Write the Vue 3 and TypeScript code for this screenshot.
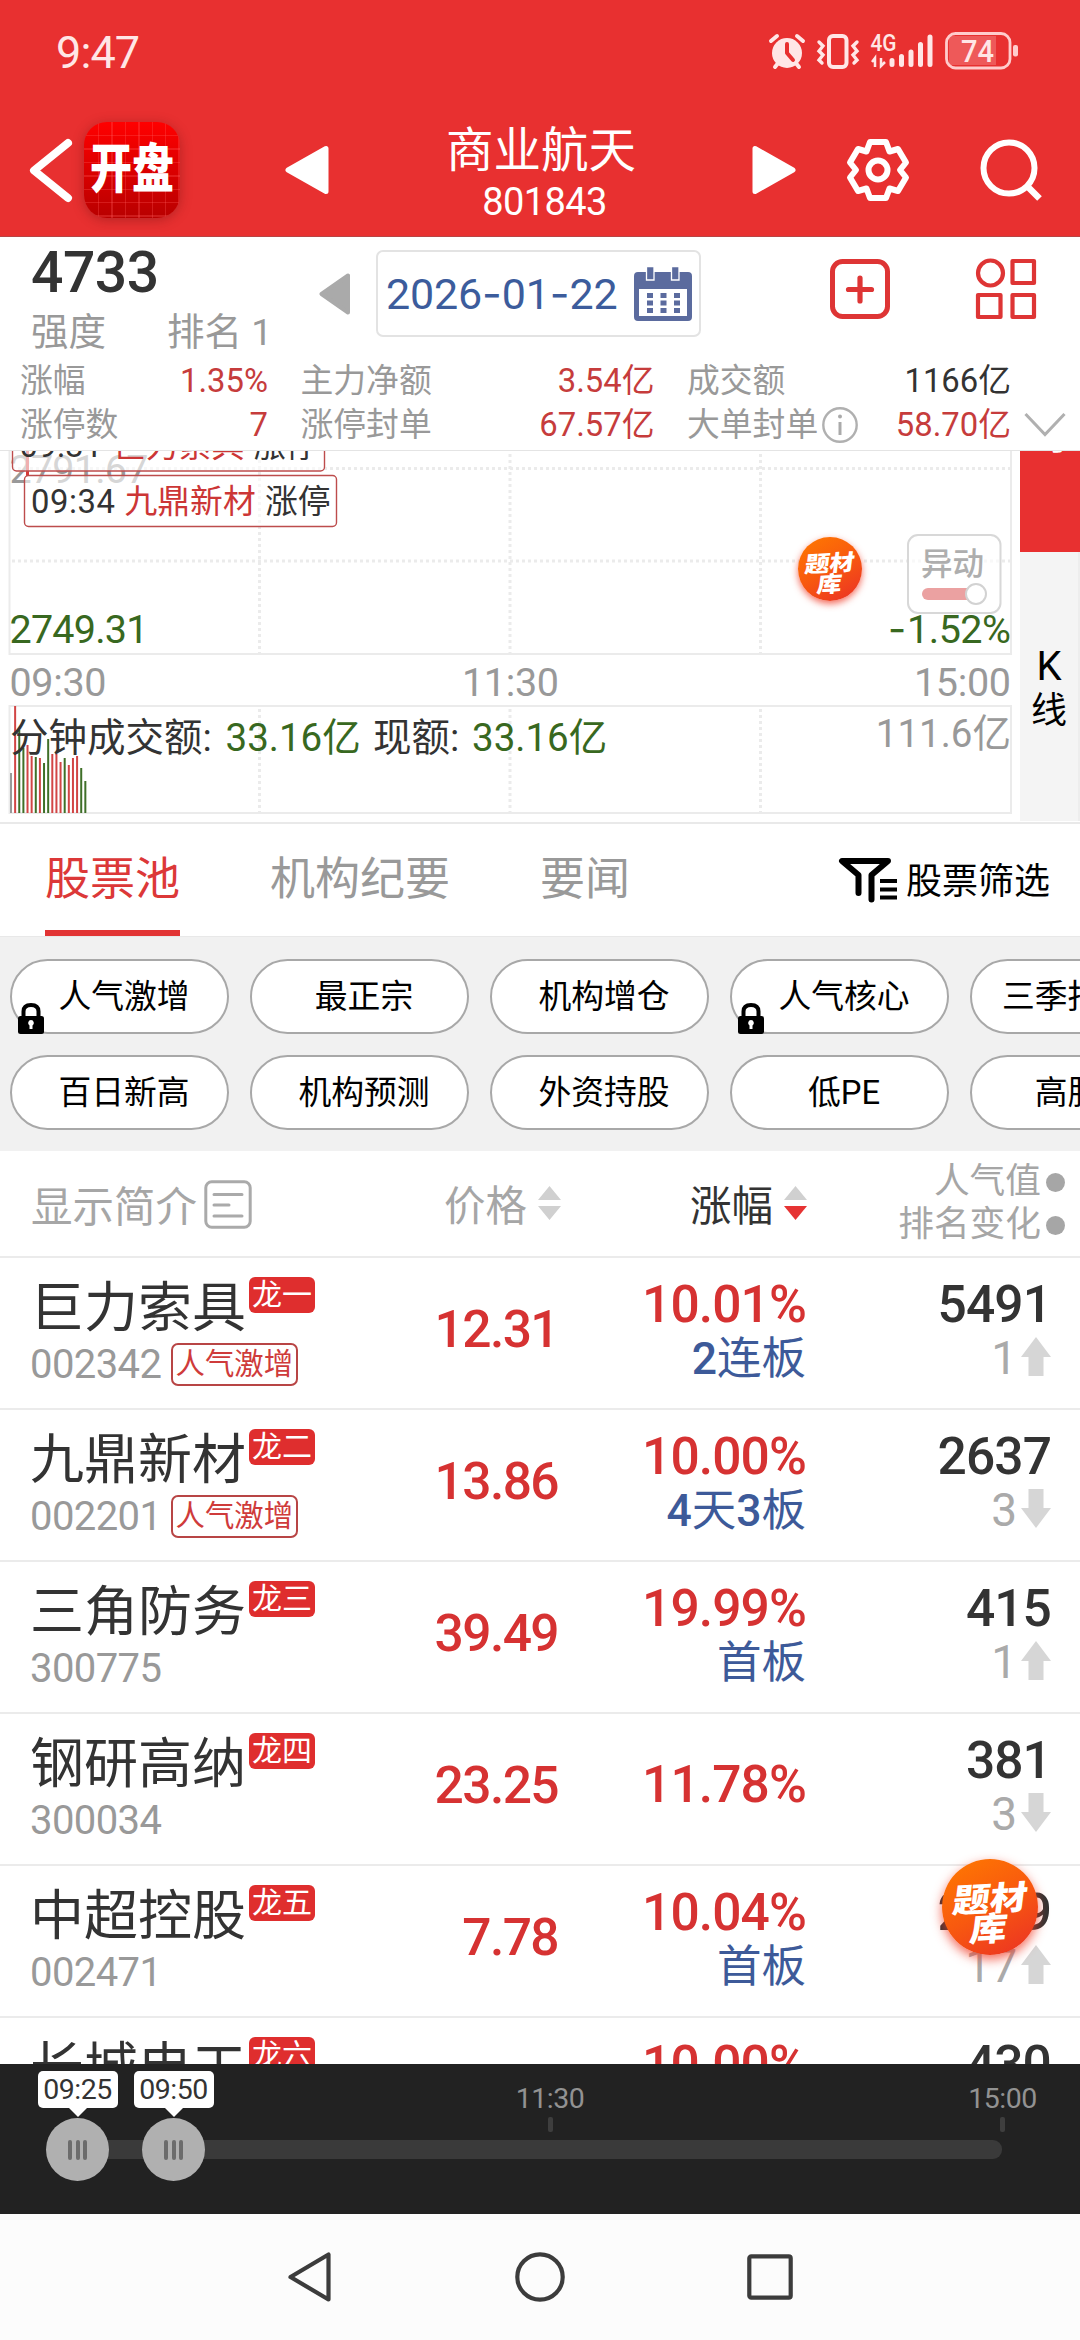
<script setup lang="ts">
interface Stat {
  label: string
  value: string
  tone: 'up' | 'plain'
  info?: boolean
}
interface Chip {
  text: string
  locked?: boolean
}
interface Stock {
  name: string
  code?: string
  rank: string
  tag?: string
  price?: string
  pct: string
  streak?: string
  solo?: boolean
  heat: string
  move?: string
  dir?: 'up' | 'down'
}
interface Bar {
  h: number
  c: string
}

const stats: Stat[] = [
  { label: '涨幅', value: '1.35%', tone: 'up' },
  { label: '主力净额', value: '3.54亿', tone: 'up' },
  { label: '成交额', value: '1166亿', tone: 'plain' },
  { label: '涨停数', value: '7', tone: 'up' },
  { label: '涨停封单', value: '67.57亿', tone: 'up' },
  { label: '大单封单', value: '58.70亿', tone: 'up', info: true },
]

const tabs: string[] = ['股票池', '机构纪要', '要闻']

const chipRows: Chip[][] = [
  [
    { text: '人气激增', locked: true },
    { text: '最正宗' },
    { text: '机构增仓' },
    { text: '人气核心', locked: true },
    { text: '三季报预增' },
  ],
  [
    { text: '百日新高' },
    { text: '机构预测' },
    { text: '外资持股' },
    { text: '低PE' },
    { text: '高股息' },
  ],
]

const stocks: Stock[] = [
  { name: '巨力索具', code: '002342', rank: '龙一', tag: '人气激增', price: '12.31', pct: '10.01%', streak: '2连板', heat: '5491', move: '1', dir: 'up' },
  { name: '九鼎新材', code: '002201', rank: '龙二', tag: '人气激增', price: '13.86', pct: '10.00%', streak: '4天3板', heat: '2637', move: '3', dir: 'down' },
  { name: '三角防务', code: '300775', rank: '龙三', price: '39.49', pct: '19.99%', streak: '首板', heat: '415', move: '1', dir: 'up' },
  { name: '钢研高纳', code: '300034', rank: '龙四', price: '23.25', pct: '11.78%', solo: true, heat: '381', move: '3', dir: 'down' },
  { name: '中超控股', code: '002471', rank: '龙五', price: '7.78', pct: '10.04%', streak: '首板', heat: '2199', move: '17', dir: 'up' },
  { name: '长城电工', rank: '龙六', pct: '10.00%', heat: '430' },
]

// digits in a streak label are set heavier than the characters around them
const pieces = (s: string): string[] => s.match(/\d+|\D+/g) ?? []
const isDigit = (s: string): boolean => /^\d/.test(s)

const R = '#d24545'
const G = '#3f6f28'
const bars: Bar[] = [
  { h: 40, c: '#9a9a9a' }, { h: 107, c: R }, { h: 83, c: G }, { h: 65, c: G },
  { h: 68, c: R }, { h: 57, c: R }, { h: 56, c: G }, { h: 55, c: R },
  { h: 50, c: G }, { h: 74, c: G }, { h: 59, c: R }, { h: 59, c: R },
  { h: 51, c: R }, { h: 55, c: G }, { h: 48, c: R }, { h: 55, c: R },
  { h: 57, c: R }, { h: 45, c: G }, { h: 32, c: G },
]

const handles: string[] = ['09:25', '09:50']
</script>

<template>
  <div class="screen">
    <header class="top">
      <div class="status">
        <span class="clock">9:47</span>
        <svg class="status-icons" width="256" height="42" viewBox="765 30 256 42">
          <g fill="#ffe6e6" stroke="#ffe6e6">
            <circle cx="787" cy="53" r="15" stroke="none" />
            <path d="M771 41l6-5M803 41l-6-5M775 67l4-5M799 67l-4-5" stroke-width="4" stroke-linecap="round" />
            <path d="M787 44v9l6 7" fill="none" stroke="#e83030" stroke-width="4" stroke-linecap="round" stroke-linejoin="round" />
            <rect x="829" y="36" width="17.500" height="31" rx="4" fill="none" stroke-width="4" />
            <path d="M819 42l4 4-4 5 4 4-4 5 3 3M857 42l-4 4 4 5-4 4 4 5-3 3" fill="none" stroke-width="3.400" stroke-linecap="round" />
            <path d="M875 67v-9l-3 4M881 58v8l4-4" fill="none" stroke-width="2.500" />
            <path d="M892 60.500v4M901.500 56.500v8M911 52v12.500M920.500 44.500v20M930 37v27.500" stroke-width="5" stroke-linecap="round" />
          </g>
          <text x="870.500" y="51" class="net" textLength="26" lengthAdjust="spacingAndGlyphs">4G</text>
          <rect x="949" y="36" width="47" height="29" fill="#ee5959" />
          <rect x="946.500" y="33.500" width="63.500" height="34.500" rx="9" fill="none" stroke="#ffcccc" stroke-width="2.800" />
          <rect x="1013" y="45" width="5" height="11.500" rx="2" fill="#ffcccc" />
          <text x="961" y="62" class="batt" textLength="33" lengthAdjust="spacingAndGlyphs">74</text>
        </svg>
      </div>
      <div class="bar">
        <svg class="back" width="44" height="66" viewBox="29 136 44 66"><path d="M68 142L34 169.500L68 197" fill="none" stroke="#fff" stroke-width="8" stroke-linecap="round" stroke-linejoin="round" /></svg>
        <div class="logo"><span>开盘</span></div>
        <svg class="prev" width="44" height="50" viewBox="0 0 44 50"><path d="M3 25L41 3.500V46.500Z" fill="#fff" stroke="#fff" stroke-width="5" stroke-linejoin="round" /></svg>
        <div class="title">
          <h1>商业航天</h1>
          <p>801843</p>
        </div>
        <svg class="next" width="44" height="50" viewBox="0 0 44 50"><path d="M41 25L3 3.500V46.500Z" fill="#fff" stroke="#fff" stroke-width="5" stroke-linejoin="round" /></svg>
        <svg class="gear" width="66" height="66" viewBox="-33 -33 66 66">
          <path d="M-8-28H8L11.500-18.500L20-21L28-7.500L22 0L28 7.500L20 21L11.500 18.500L8 28H-8L-11.500 18.500L-20 21L-28 7.500L-22 0L-28-7.500L-20-21L-11.500-18.500Z" fill="none" stroke="#fff" stroke-width="6" stroke-linejoin="round" />
          <circle r="9.500" fill="none" stroke="#fff" stroke-width="6" />
        </svg>
        <svg class="search" width="64" height="64" viewBox="980 136 64 64"><circle cx="1009" cy="166" r="25.500" fill="none" stroke="#fff" stroke-width="6" /><path d="M1027 184l12.500 12.500" stroke="#fff" stroke-width="6.500" /></svg>
      </div>
    </header>

    <section class="summary">
      <div class="sum-top">
        <div class="strength">
          <strong>4733</strong>
          <p><span>强度</span><span>排名 1</span></p>
        </div>
        <svg class="day-prev" width="32" height="42" viewBox="0 0 32 42"><path d="M2.500 21L29 2.500V39.500Z" fill="#aaa" stroke="#aaa" stroke-width="4" stroke-linejoin="round" /></svg>
        <div class="date">
          <span class="date-text">2026<i>-</i>01<i>-</i>22</span>
          <svg width="58" height="56" viewBox="634 265 58 56">
            <path d="M638 271h50q4 0 4 4v41q0 4-4 4h-50q-4 0-4-4v-41q0-4 4-4zM639 288v27h48v-27z" fill="#5b6b9e" fill-rule="evenodd" />
            <path d="M646.500 265.500h7.500v13.500h-7.500zM671.500 265.500h7.500v13.500h-7.500z" fill="#5b6b9e" stroke="#fff" stroke-width="1.300" />
            <path d="M647 294.500h6M660.500 294.500h6M674 294.500h6M647 302h6M660.500 302h6M674 302h6M647 309.500h6M660.500 309.500h6M674 309.500h6" stroke="#5b6b9e" stroke-width="5" />
          </svg>
        </div>
        <svg class="add" width="62" height="62" viewBox="829 258 62 62"><rect x="832.500" y="261.500" width="55" height="55" rx="10" fill="none" stroke="#de3535" stroke-width="5" /><path d="M860 278v23M848.500 289.500h23" stroke="#de3535" stroke-width="5.200" stroke-linecap="round" /></svg>
        <svg class="modules" width="62" height="62" viewBox="975 258 62 62"><g fill="none" stroke="#de3535" stroke-width="4.200" stroke-linejoin="round"><circle cx="990.500" cy="273" r="12.500" /><rect x="1012.500" y="261" width="21.500" height="22" /><rect x="978" y="295" width="22.500" height="22" /><rect x="1012.500" y="295" width="21.500" height="22" /></g></svg>
      </div>
      <div class="stats">
        <div v-for="s in stats" :key="s.label" class="stat">
          <span class="k">{{ s.label }}</span>
          <svg v-if="s.info" width="38" height="38" viewBox="0 0 38 38"><circle cx="19" cy="19" r="16.700" fill="none" stroke="#b0b0b0" stroke-width="2.400" /><path d="M19 16v13" stroke="#aaa" stroke-width="3" /><circle cx="19" cy="10.500" r="2" fill="#aaa" /></svg>
          <span class="v" :class="s.tone">{{ s.value }}</span>
        </div>
        <svg class="more" width="42" height="28" viewBox="0 0 42 28"><path d="M1.500 3L21 23.500L40.500 3" fill="none" stroke="#b0b0b0" stroke-width="3" /></svg>
      </div>
    </section>

    <section class="chart">
      <svg class="plot" width="1020" height="372" viewBox="0 451 1020 372">
        <g fill="none" stroke="#ebebeb" stroke-width="2">
          <path d="M9.500 451V654H1011V451" />
          <rect x="9.500" y="706" width="1001.500" height="107" />
          <path d="M12 468.500H1010M12 561H1010M259.500 454V653M510 454V653M760.500 454V653M259.500 709V812M510 709V812M760.500 709V812" stroke-width="3" stroke-dasharray="3 3" />
        </g>
        <text x="9.500" y="483" class="ax" fill="#999" textLength="139">2791.67</text>
        <rect x="26" y="451" width="3" height="25" fill="#d83838" />
        <rect x="12.500" y="420" width="312" height="51" rx="4" class="note" />
        <text y="457" class="nt"><tspan x="19.500" textLength="83">09:31</tspan><tspan x="113" fill="#cc3636">巨力索具</tspan><tspan x="253">涨停</tspan></text>
        <rect x="24.500" y="475.500" width="312" height="51" rx="4" class="note" />
        <text y="513" class="nt"><tspan x="31" textLength="84">09:34</tspan><tspan x="124.500" fill="#cc3636">九鼎新材</tspan><tspan x="265">涨停</tspan></text>
        <text x="9.500" y="643" class="ax" fill="#386820" textLength="139">2749.31</text>
        <text x="9.500" y="696" class="ax" fill="#999" textLength="97">09:30</text>
        <text x="462" y="696" class="ax" fill="#999" textLength="97">11:30</text>
        <text x="914" y="696" class="ax" fill="#999" textLength="97">15:00</text>
        <rect v-for="(b, i) in bars" :key="i" :x="10 + i * 4.13" :y="813 - b.h" width="2" :height="b.h" :fill="b.c" />
        <text y="751" class="vol" fill="#333">
          <tspan x="10">分钟成交额:</tspan><tspan x="225.500" fill="#386820">33.16亿</tspan><tspan x="373">现额:</tspan><tspan x="472" fill="#386820">33.16亿</tspan>
        </text>
        <text x="1011" y="747" class="vol" fill="#999" text-anchor="end">111.6亿</text>
        <g opacity="0.95">
          <rect x="908" y="535" width="92.500" height="78" rx="10" fill="#fff" fill-opacity="0.700" stroke="#d6d6d6" stroke-width="2" />
          <text x="921" y="575" class="sw">异动</text>
          <path d="M928 594H970" stroke="#ea9c9c" stroke-width="12" stroke-linecap="round" />
          <circle cx="976" cy="594" r="10" fill="#fff" stroke="#d0d0d0" stroke-width="2" />
        </g>
        <text x="888" y="643" class="ax" fill="#386820"><tspan class="wide-dash">-</tspan><tspan x="907" textLength="104">1.52%</tspan></text>
      </svg>
      <nav class="side">
        <div class="side-on"><span>分</span><span>时</span></div>
        <div class="side-off"><span>K</span><span>线</span></div>
      </nav>
      <div class="topic small"><span>题材</span><span>库</span></div>
    </section>

    <nav class="tabs">
      <span v-for="(t, i) in tabs" :key="t" class="tab" :class="{ on: i === 0 }">{{ t }}</span>
      <div class="filter">
        <svg width="60" height="46" viewBox="838 857 60 46"><path d="M858.500 893V875L842 861H888L871.500 875V899.500" fill="none" stroke="#000" stroke-width="6" stroke-linecap="round" stroke-linejoin="round" /><path d="M880 881h17M880 889.500h17M880 897.500h17" stroke="#000" stroke-width="4" /></svg>
        <span>股票筛选</span>
      </div>
    </nav>

    <section class="chips">
      <div v-for="(row, r) in chipRows" :key="r" class="chip-row">
        <div v-for="c in row" :key="c.text" class="chip">
          {{ c.text }}
          <svg v-if="c.locked" class="lock" width="26" height="31" viewBox="0 0 26 31"><path d="M5.500 14V8.500Q5.500 2 13 2T20.500 8.500V14" fill="none" stroke="#000" stroke-width="4" /><rect y="13" width="26" height="18" rx="2.500" /><path d="M13 17a3 3 0 0 1 1.500 5.500V26h-3v-3.500A3 3 0 0 1 13 17z" fill="#fff" /></svg>
        </div>
      </div>
    </section>

    <section class="table">
      <div class="thead">
        <div class="th-name">
          <span>显示简介</span>
          <svg width="48" height="49" viewBox="0 0 48 49"><rect x="1.800" y="1.800" width="44.400" height="45.400" rx="6" fill="none" stroke="#aaa" stroke-width="3" /><path d="M10 14.500h28M10 25h15M10 36h28" stroke="#aaa" stroke-width="3" stroke-linecap="round" /></svg>
        </div>
        <div class="th-sort price-h"><span>价格</span><svg width="23" height="34" viewBox="0 0 23 34"><path d="M11.500 0L23 14H0zM11.500 34L0 20H23z" fill="#d0d0d0" /></svg></div>
        <div class="th-sort pct-h"><span>涨幅</span><svg width="23" height="34" viewBox="0 0 23 34"><path d="M11.500 0L23 14H0z" fill="#d0d0d0" /><path d="M11.500 34L0 20H23z" fill="#e63333" /></svg></div>
        <div class="th-heat"><p>人气值<i /></p><p>排名变化<i /></p></div>
      </div>
      <div v-for="s in stocks" :key="s.name" class="row">
        <div class="c-name">
          <div class="n1"><span class="name">{{ s.name }}</span><span class="rank">{{ s.rank }}</span></div>
          <div class="n2"><span v-if="s.code" class="code">{{ s.code }}</span><span v-if="s.tag" class="tag">{{ s.tag }}</span></div>
        </div>
        <div class="c-price num">{{ s.price }}</div>
        <div class="c-pct" :class="{ solo: s.solo }">
          <span class="num">{{ s.pct }}</span>
          <span v-if="s.streak" class="streak"><span v-for="(t, i) in pieces(s.streak)" :key="i" :class="{ d: isDigit(t) }">{{ t }}</span></span>
        </div>
        <div class="c-heat">
          <span class="num">{{ s.heat }}</span>
          <span v-if="s.move" class="move">{{ s.move }}<svg width="30" height="39" viewBox="0 0 30 39" :class="s.dir"><path d="M15 0L30 20H22.500V39H7.500V20H0z" fill="#d6d6d6" /></svg></span>
        </div>
      </div>
      <div class="topic large"><span>题材</span><span>库</span></div>
    </section>

    <section class="timeline">
      <div class="tick noon"><span>11:30</span><i /></div>
      <div class="tick close"><span>15:00</span><i /></div>
      <div class="track" />
      <div v-for="(h, i) in handles" :key="h" class="handle" :class="'h' + i">
        <span class="bubble">{{ h }}</span>
        <span class="knob"><i /><i /><i /></span>
      </div>
    </section>

    <footer class="sysnav">
      <svg width="46" height="54" viewBox="0 0 46 54"><path d="M3.500 27L41.500 4.500V49.500Z" fill="none" stroke="#3c3c3c" stroke-width="4.200" stroke-linejoin="round" /></svg>
      <svg width="50" height="50" viewBox="0 0 50 50"><circle cx="25" cy="25" r="22.700" fill="none" stroke="#3c3c3c" stroke-width="4.200" /></svg>
      <svg width="46" height="46" viewBox="0 0 46 46"><rect x="2.300" y="2.300" width="41.400" height="41.400" rx="2" fill="none" stroke="#3c3c3c" stroke-width="4.200" /></svg>
    </footer>
  </div>
</template>

<style>
html,
body {
  margin: 0;
  overflow: hidden;
}
</style>

<style scoped>
.screen {
  width: 1080px;
  height: 2340px;
  display: flex;
  flex-direction: column;
  overflow: hidden;
  background: #fff;
  color: #333;
  font-family: Roboto, "Noto Sans CJK SC", sans-serif;
  white-space: nowrap;
}
.screen * {
  box-sizing: border-box;
}
svg {
  display: block;
  flex: none;
}
p,
h1 {
  margin: 0;
  font-weight: 400;
}
i {
  font-style: normal;
}

/* header */
.top {
  height: 237px;
  flex: none;
  background: #e83030;
  border-bottom: 1px solid #b84444;
  color: #fff;
}
.status {
  height: 104px;
  display: flex;
  justify-content: space-between;
  padding: 30px 59px 0 56px;
}
.clock {
  font-size: 45px;
  line-height: 45px;
  letter-spacing: -0.9px;
  color: #ffe6e6;
}
.net {
  font: 500 23px Roboto, sans-serif;
  fill: #ffe6e6;
}
.batt {
  font: 500 32px Roboto, sans-serif;
  fill: #ffe6e6;
}
.bar {
  height: 132px;
  display: flex;
  align-items: center;
  padding-left: 29px;
}
.logo {
  width: 96px;
  height: 96px;
  margin-left: 11px;
  border-radius: 23px;
  display: flex;
  align-items: center;
  justify-content: center;
  background:
    repeating-linear-gradient(90deg, transparent 0 12px, rgba(255, 90, 90, 0.3) 12px 13.4px) 2px 0,
    repeating-linear-gradient(180deg, transparent 0 12px, rgba(255, 90, 90, 0.3) 12px 13.4px) 0 1px,
    linear-gradient(#ff0000, #b80000);
  box-shadow: 0 2px 12px rgba(120, 20, 20, 0.45);
}
.logo span {
  font-size: 42px;
  font-weight: 900;
  line-height: 50px;
  transform: scaleY(1.26);
}
.prev {
  margin-left: 105px;
}
.title {
  width: 192px;
  margin-left: 116px;
  height: 132px;
  padding-top: 18px;
  text-align: center;
}
.title h1 {
  font-size: 47.5px;
  line-height: 58px;
}
.title p {
  font-size: 38px;
  line-height: 44px;
  letter-spacing: -0.6px;
  padding-left: 7px;
}
.next {
  margin-left: 115px;
}
.gear {
  margin-left: 49px;
}
.search {
  margin-left: 69px;
}

/* summary */
.summary {
  height: 214px;
  flex: none;
  border-bottom: 1px solid #e4e4e4;
}
.sum-top {
  height: 122px;
  display: flex;
  align-items: flex-start;
  padding-left: 31px;
}
.strength {
  width: 288px;
}
.strength strong {
  display: block;
  font-size: 57px;
  font-weight: 500;
  line-height: 60px;
  letter-spacing: -0.5px;
  padding-top: 6px;
  height: 73px;
}
.strength p {
  font-size: 37.500px;
  line-height: 45px;
  color: #999;
  display: flex;
  gap: 61px;
}
.day-prev {
  margin-top: 36px;
}
.date {
  width: 325px;
  height: 87px;
  margin: 13px 0 0 25px;
  border: 2px solid #e3e3e3;
  border-radius: 7px;
  display: flex;
  align-items: center;
  padding-left: 8px;
  color: #3c5c9c;
}
.date-text {
  width: 248px;
  font-size: 43px;
  line-height: 80px;
  letter-spacing: -0.15px;
}
.date-text i {
  font-family: Inter, sans-serif;
}
.add {
  margin: 21px 0 0 128px;
}
.modules {
  margin: 21px 0 0 84px;
}
.stats {
  display: grid;
  position: relative;
  grid-template-columns: 248px 354px 324px;
  column-gap: 32.500px;
  grid-auto-rows: 44px;
  padding-left: 20px;
}
.stat {
  display: flex;
  align-items: center;
  font-size: 32.800px;
  line-height: 44px;
}
.stat .k {
  color: #999;
}
.stat svg {
  margin-left: 3px;
}
.stat .v {
  margin-left: auto;
}
.v.up {
  color: #c63c3c;
}
.more {
  position: absolute;
  right: 14px;
  top: 52px;
}

/* chart */
.chart {
  height: 373px;
  flex: none;
  display: flex;
  position: relative;
  border-bottom: 2px solid #e9e9e9;
}
.ax {
  font-size: 39.500px;
}
.wide-dash {
  font-family: Inter, sans-serif;
}
.note {
  fill: rgba(255, 255, 255, 0.6);
  stroke: #bd4c4c;
  stroke-width: 1.400px;
}
.nt {
  font-size: 32.800px;
  fill: #333;
}
.vol {
  font-size: 38.500px;
}
.sw {
  font-size: 31.500px;
  font-weight: 500;
  fill: #aaa;
}
.side {
  width: 60px;
  height: 370px;
}
.side div {
  display: flex;
  flex-direction: column;
  align-items: center;
  font-size: 36px;
  line-height: 45px;
}
.side-on {
  height: 101px;
  background: #e83030;
  color: #fff;
  overflow: hidden;
}
.side-on span {
  margin-top: -1px;
}
.side-on span:first-child {
  margin-top: -79px;
}
.side-off {
  height: 269px;
  background: #f4f4f4;
  color: #000;
  padding-top: 92px;
  border-right: 2px solid #ededed;
}
.side-off span:first-child {
  font-size: 40px;
}

/* floating topic button */
.topic {
  position: absolute;
  width: 2.6em;
  height: 2.6em;
  border-radius: 50%;
  background: linear-gradient(150deg, #ff7a00, #f8590f 50%, #ea2f26);
  box-shadow: 0 0.12em 0.3em rgba(240, 60, 40, 0.75);
  color: #fff;
  font-weight: 900;
  display: flex;
  flex-direction: column;
  align-items: center;
  padding-top: 0.7em;
}
.topic span {
  line-height: 0.82em;
  transform: skewX(-10deg) rotate(-3deg) scaleY(0.9);
}
.topic span + span {
  margin-left: -0.1em;
}
.small {
  font-size: 24.700px;
  left: 798px;
  top: 86px;
}
.large {
  font-size: 37px;
  left: 942px;
  top: 708px;
}

/* tabs */
.tabs {
  height: 113px;
  flex: none;
  display: flex;
  gap: 90px;
  padding: 0 30px 0 45px;
  border-bottom: 1px solid #e8e8e8;
}
.tab {
  font-size: 45px;
  line-height: 111px;
  height: 112px;
  color: #999;
}
.tab.on {
  color: #dc3838;
  border-bottom: 6px solid #e23434;
}
.filter {
  margin-left: auto;
  display: flex;
  align-items: center;
  gap: 8px;
  color: #000;
  font-size: 36px;
  line-height: 110px;
}
.filter span {
  padding-top: 4px;
}

/* chips */
.chips {
  height: 214px;
  flex: none;
  background: #f1f1f1;
  padding: 22px 0 0 10px;
  display: flex;
  flex-direction: column;
  gap: 21px;
  overflow: hidden;
}
.chip-row {
  display: flex;
  gap: 21px;
}
.chip {
  position: relative;
  width: 219px;
  height: 75px;
  flex: none;
  border: 2px solid #a8a8a8;
  border-radius: 38px;
  background: #fff;
  color: #000;
  font-size: 32.800px;
  line-height: 73px;
  text-align: center;
  padding-left: 9px;
}
.lock {
  position: absolute;
  left: 6px;
  bottom: -2px;
}

/* table */
.table {
  height: 913px;
  flex: none;
  position: relative;
  overflow: hidden;
}
.thead {
  height: 107px;
  display: flex;
  align-items: center;
  border-bottom: 2px solid #ebebeb;
  padding-left: 31px;
  font-size: 41.500px;
  color: #a6a6a6;
}
.th-name {
  display: flex;
  align-items: center;
  gap: 7px;
  width: 413px;
}
.th-name svg {
  margin-top: 2px;
}
.th-sort {
  display: flex;
  align-items: center;
  gap: 11px;
  width: 246px;
}
.th-sort span {
  margin-top: -2px;
}
.th-sort svg {
  margin-top: -2px;
}
.pct-h {
  width: 116px;
  color: #333;
}
.th-heat {
  width: 259px;
  font-size: 35.700px;
  line-height: 43px;
  padding-bottom: 1px;
}
.th-heat p {
  display: flex;
  align-items: center;
  justify-content: flex-end;
}
.th-heat i {
  width: 19px;
  height: 19px;
  margin: 1px 0 0 5px;
  border-radius: 50%;
  background: #a6a6a6;
}
.row {
  height: 152px;
  border-bottom: 2px solid #ebebeb;
  padding-left: 30px;
  display: grid;
  grid-template-columns: 331px 197px 248px 245px;
}
.n1 {
  display: flex;
  height: 84px;
  padding-top: 19px;
}
.name {
  font-size: 54px;
  line-height: 64px;
}
.rank {
  width: 66px;
  height: 36px;
  margin-left: 3px;
  border-radius: 6px;
  background: #df2e2e;
  color: #fff;
  font-size: 30px;
  line-height: 35px;
  text-align: center;
}
.n2 {
  display: flex;
  align-items: center;
  height: 46px;
}
.code {
  width: 141px;
  font-size: 40px;
  line-height: 46px;
  letter-spacing: -0.600px;
  color: #999;
}
.tag {
  height: 43px;
  margin-top: -2px;
  border: 2px solid #b84545;
  border-radius: 7px;
  padding: 0 2.500px;
  font-size: 29.400px;
  line-height: 38px;
  color: #cf3b3b;
}
.num {
  font-size: 51.500px;
  font-weight: 500;
  line-height: 52px;
  letter-spacing: -0.9px;
}
.c-price {
  text-align: right;
  padding-top: 46px;
  letter-spacing: -1.6px;
  color: #d63232;
}
.c-pct {
  display: flex;
  flex-direction: column;
  align-items: flex-end;
  padding-top: 21px;
  color: #d63232;
}
.c-pct.solo {
  padding-top: 45px;
}
.streak {
  font-size: 44.500px;
  line-height: 56px;
  color: #3d5a99;
}
.streak .d {
  font-weight: 500;
}
.c-heat {
  display: flex;
  flex-direction: column;
  align-items: flex-end;
  padding-top: 21px;
}
.move {
  display: flex;
  align-items: center;
  gap: 4px;
  font-size: 46px;
  line-height: 55px;
  color: #aaa;
}
.move svg {
  margin-top: -5px;
}
.down {
  transform: rotate(180deg);
}

/* timeline slider */
.timeline {
  height: 150px;
  flex: none;
  position: relative;
  background: #222;
}
.track {
  position: absolute;
  left: 77px;
  top: 76px;
  width: 925px;
  height: 18.500px;
  border-radius: 9px;
  background: #3a3a3a;
}
.tick {
  position: absolute;
  top: 19px;
  width: 80px;
  display: flex;
  flex-direction: column;
  align-items: center;
  font-size: 28.500px;
  line-height: 32px;
  letter-spacing: -0.5px;
  color: #929292;
}
.tick i {
  width: 5px;
  height: 15px;
  margin-top: 2px;
  border-radius: 2px;
  background: #3e3e3e;
}
.noon {
  left: 510px;
}
.close {
  left: 962.500px;
}
.handle {
  position: absolute;
  top: 7px;
  width: 80px;
  display: flex;
  flex-direction: column;
  align-items: center;
  gap: 10px;
}
.h0 {
  left: 37.500px;
}
.h1 {
  left: 133.500px;
}
.bubble {
  position: relative;
  width: 80px;
  height: 37px;
  border-radius: 5px;
  background: #fff;
  color: #333;
  font-size: 28.500px;
  line-height: 38px;
  letter-spacing: -0.5px;
  text-align: center;
}
.bubble::after {
  content: "";
  position: absolute;
  left: 30px;
  top: 36px;
  border: 10px solid transparent;
  border-top-color: #fff;
  border-bottom: 0;
}
.knob {
  width: 63px;
  height: 63px;
  border-radius: 50%;
  background: #b0b0b0;
  display: flex;
  align-items: center;
  justify-content: center;
  gap: 3.700px;
}
.knob i {
  width: 4px;
  height: 20px;
  border-radius: 2px;
  background: #6c6c6c;
}

/* system navigation */
.sysnav {
  height: 126px;
  flex: none;
  background: #fcfcfc;
  display: flex;
  align-items: center;
  justify-content: center;
  gap: 182px;
}
</style>
